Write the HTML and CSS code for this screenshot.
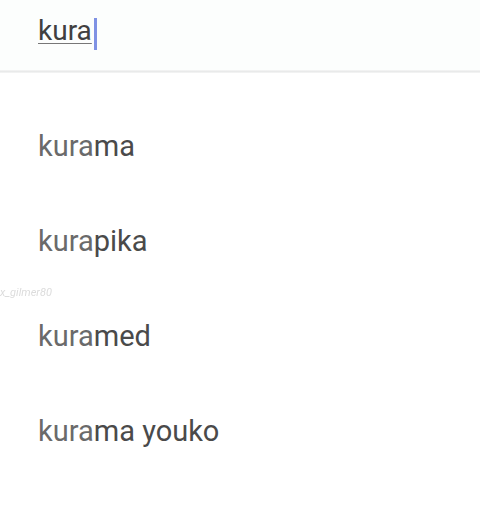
FILE: index.html
```html
<!DOCTYPE html>
<html>
<head>
<meta charset="utf-8">
<link rel="stylesheet" href="styles.css">
</head>
<body>
<div class="screen">
  <div class="search">
    <span class="query">kura</span><span class="cursor"></span>
  </div>
  <div class="divider"></div>
  <ul class="suggestions">
    <li class="item"><span class="typed">kura</span><span class="rest">ma</span></li>
    <li class="item"><span class="typed">kura</span><span class="rest">pika</span></li>
    <li class="item"><span class="typed">kura</span><span class="rest">med</span></li>
    <li class="item"><span class="typed">kura</span><span class="rest">ma youko</span></li>
  </ul>
  <div class="ghost">x_gilmer80</div>
</div>
</body>
</html>
```
FILE: styles.css
```css
html, body {
  margin: 0;
  padding: 0;
  background: #ffffff;
}
.screen {
  position: relative;
  width: 480px;
  height: 506px;
  overflow: hidden;
  font-family: Roboto, "Noto Sans", sans-serif;
}
.search {
  height: 70px;
  box-sizing: border-box;
  padding: 15px 0 0 38px;
  background: #fcfefd;
  display: flex;
  align-items: flex-start;
}
.query {
  font-size: 28px;
  line-height: 32px;
  color: #404040;
  text-decoration: underline;
  text-decoration-color: #777;
  text-decoration-thickness: 1px;
  text-underline-offset: 3px;
}
.cursor {
  display: block;
  width: 3px;
  height: 32px;
  margin-top: 3px;
  margin-left: 2px;
  background: #7f92e4;
}
.divider {
  height: 3px;
  background: linear-gradient(#f6f6f6, #e9eaea 50%, #f6f6f6);
}
.suggestions {
  list-style: none;
  margin: 0;
  padding: 25px 0 0 0;
}
.item {
  height: 95px;
  display: flex;
  align-items: center;
  padding-left: 38px;
  font-size: 29px;
  line-height: 32px;
  white-space: pre;
}
.typed {
  color: #6a6a6a;
}
.rest {
  color: #4a4a4a;
}
.ghost {
  position: absolute;
  left: 0;
  top: 286px;
  font-size: 11px;
  line-height: 14px;
  font-style: italic;
  color: #dcdcdc;
  filter: blur(0.6px);
}
```
